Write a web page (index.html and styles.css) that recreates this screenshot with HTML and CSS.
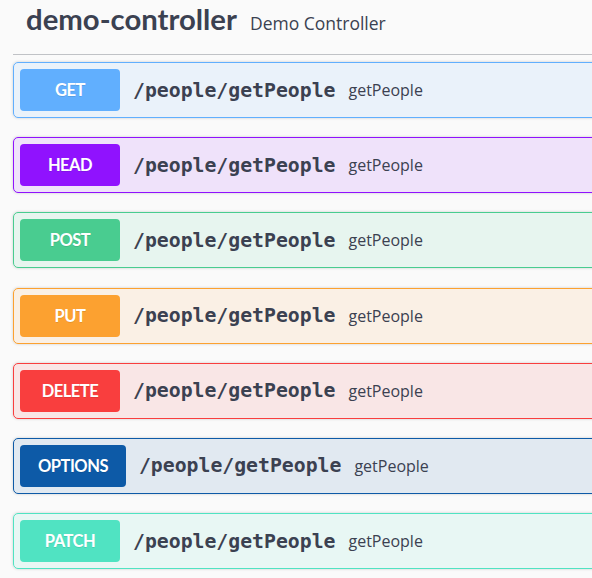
FILE: index.html
```html
<!DOCTYPE html>
<html>
<head>
<meta charset="utf-8">
<link rel="stylesheet" href="styles.css">
</head>
<body>
<div class="section">
  <h3 class="tag">
    <span class="tag-name">demo-controller</span>
    <small class="tag-desc">Demo Controller</small>
  </h3>
  <div class="op op-get"><span class="method">GET</span><span class="path">/people/getPeople</span><span class="desc">getPeople</span></div>
  <div class="op op-head"><span class="method">HEAD</span><span class="path">/people/getPeople</span><span class="desc">getPeople</span></div>
  <div class="op op-post"><span class="method">POST</span><span class="path">/people/getPeople</span><span class="desc">getPeople</span></div>
  <div class="op op-put"><span class="method">PUT</span><span class="path">/people/getPeople</span><span class="desc">getPeople</span></div>
  <div class="op op-delete"><span class="method">DELETE</span><span class="path">/people/getPeople</span><span class="desc">getPeople</span></div>
  <div class="op op-options"><span class="method">OPTIONS</span><span class="path">/people/getPeople</span><span class="desc">getPeople</span></div>
  <div class="op op-patch"><span class="method">PATCH</span><span class="path">/people/getPeople</span><span class="desc">getPeople</span></div>
</div>
</body>
</html>
```
FILE: styles.css
```css
html, body {
  margin: 0;
  padding: 0;
  overflow: hidden;
  background: #fafafa;
}
body {
  width: 720px;
  color: #3b4151;
}
.section {
  margin-left: 13px;
}
.tag {
  display: flex;
  align-items: baseline;
  margin: 0 0 7px 0;
  padding: 1px 13px 17px 13px;
  border-bottom: 1px solid rgba(59, 65, 81, 0.3);
  font-weight: normal;
}
.tag-name {
  font-family: "Lato", sans-serif;
  font-weight: 700;
  font-size: 29.3px;
  line-height: 36px;
  color: #3b4151;
}
.tag-desc {
  font-family: "Open Sans", sans-serif;
  font-size: 17.5px;
  margin-left: 13px;
  color: #3b4151;
}
.op {
  display: flex;
  align-items: center;
  height: 56px;
  box-sizing: border-box;
  padding: 6px;
  margin-bottom: 19.2px;
  border: 1px solid;
  border-radius: 5px;
  box-shadow: 0 0 3px rgba(0, 0, 0, 0.19);
}
.method {
  box-sizing: border-box;
  min-width: 100px;
  height: 42px;
  padding: 0 18px;
  display: flex;
  align-items: center;
  justify-content: center;
  border-radius: 4px;
  color: #fff;
  font-family: "Lato", sans-serif;
  font-weight: 700;
  font-size: 16.5px;
  letter-spacing: -0.5px;
  text-shadow: 0 1px 0 rgba(0, 0, 0, 0.1);
}
.path {
  padding: 0 13px;
  font-family: "DejaVu Sans Mono", monospace;
  font-weight: 700;
  font-size: 19.8px;
  color: #3b4151;
}
.desc {
  font-family: "Open Sans", sans-serif;
  font-size: 16px;
  color: #3b4151;
}
.op-get { border-color: #61affe; background: rgba(97, 175, 254, 0.1); }
.op-get .method { background: #61affe; }
.op-head { border-color: #9012fe; background: rgba(144, 18, 254, 0.1); }
.op-head .method { background: #9012fe; }
.op-post { border-color: #49cc90; background: rgba(73, 204, 144, 0.1); }
.op-post .method { background: #49cc90; }
.op-put { border-color: #fca130; background: rgba(252, 161, 48, 0.1); }
.op-put .method { background: #fca130; }
.op-delete { border-color: #f93e3e; background: rgba(249, 62, 62, 0.1); }
.op-delete .method { background: #f93e3e; }
.op-options { border-color: #0d5aa7; background: rgba(13, 90, 167, 0.1); }
.op-options .method { background: #0d5aa7; }
.op-patch { border-color: #50e3c2; background: rgba(80, 227, 194, 0.1); }
.op-patch .method { background: #50e3c2; }
```
